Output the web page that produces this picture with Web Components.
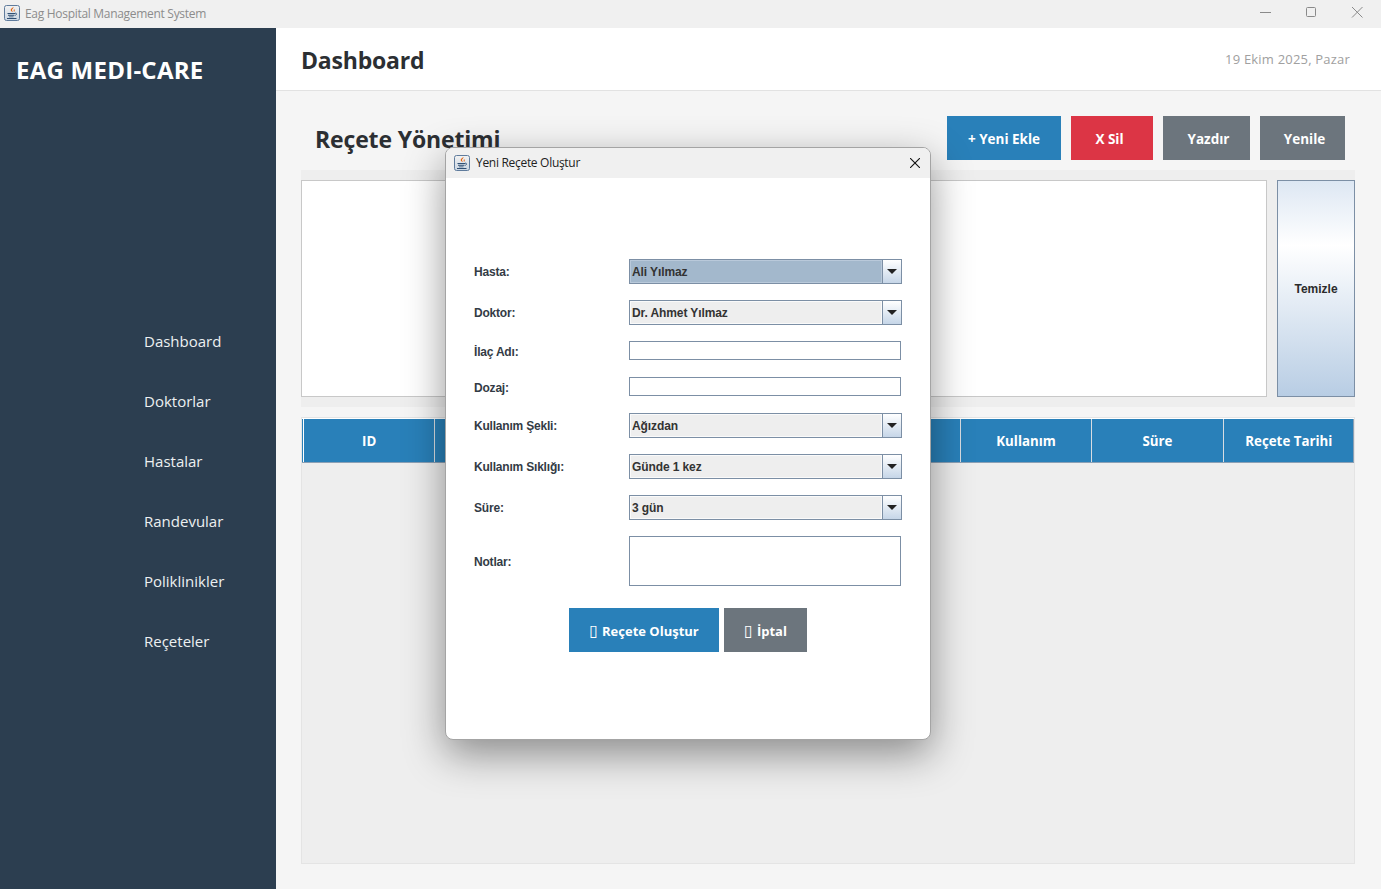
<!DOCTYPE html>
<html lang="tr">
<head>
<meta charset="utf-8">
<title>Eag Hospital Management System</title>
<style>
  html, body { margin: 0; height: 100%; overflow: hidden; background: #f5f5f5; }
  body { font-family: "Open Sans", sans-serif; }
  .tofu { font: 400 16px/0 "DejaVu Sans", sans-serif; margin-right: 4px; }
</style>
</head>
<body>
<eag-app>
  <eag-titlebar slot="titlebar">Eag Hospital Management System</eag-titlebar>
  <eag-sidebar slot="sidebar" brand="EAG MEDI-CARE">
    <eag-nav-item>Dashboard</eag-nav-item>
    <eag-nav-item>Doktorlar</eag-nav-item>
    <eag-nav-item>Hastalar</eag-nav-item>
    <eag-nav-item>Randevular</eag-nav-item>
    <eag-nav-item>Poliklinikler</eag-nav-item>
    <eag-nav-item>Reçeteler</eag-nav-item>
  </eag-sidebar>
  <eag-header slot="header" heading="Dashboard" date="19 Ekim 2025, Pazar"></eag-header>
  <eag-prescriptions slot="content"></eag-prescriptions>
  <eag-dialog slot="dialog" heading="Yeni Reçete Oluştur">
    <eag-row label="Hasta:"><eag-combo selected>Ali Yılmaz</eag-combo></eag-row>
    <eag-row label="Doktor:"><eag-combo>Dr. Ahmet Yılmaz</eag-combo></eag-row>
    <eag-row label="İlaç Adı:" short><eag-input></eag-input></eag-row>
    <eag-row label="Dozaj:" short><eag-input></eag-input></eag-row>
    <eag-row label="Kullanım Şekli:"><eag-combo>Ağızdan</eag-combo></eag-row>
    <eag-row label="Kullanım Sıklığı:"><eag-combo>Günde 1 kez</eag-combo></eag-row>
    <eag-row label="Süre:"><eag-combo>3 gün</eag-combo></eag-row>
    <eag-row label="Notlar:" tall><eag-input tall></eag-input></eag-row>
    <div style="display:flex;justify-content:center;gap:5px;margin:14px 28px 0 0">
      <eag-button color="#2980b9" width="150" size="13"><span class="tofu">▯</span>Reçete Oluştur</eag-button>
      <eag-button color="#6c757d" width="83" size="13"><span class="tofu">▯</span>İptal</eag-button>
    </div>
  </eag-dialog>
</eag-app>

<script>
const JAVA_ICON = `
  <svg class="app" width="16" height="16" viewBox="0 0 16 16" aria-hidden="true">
    <defs><linearGradient id="g" x1="0" y1="0" x2="0" y2="1"><stop offset="0" stop-color="#f2f2f2"/><stop offset="1" stop-color="#c9d5e2"/></linearGradient></defs>
    <rect x="0.5" y="0.5" width="15" height="15" rx="2" fill="url(#g)" stroke="#5f7b9c"/>
    <path d="M9.200 1.800c1.100 1.500-2 2.300-1 4 .3.500.6.900.8 1.300-2-.8-3-2-1.800-3.400.8-.8 1.900-1 2-1.900z" fill="#e8650f"/>
    <path d="M11 3.800c-1.100.6-1.700 1.100-1.200 2 .2.500.2.800 0 1.200 1.100-.6 1.200-1.200.7-1.900-.2-.5 0-.9.500-1.300z" fill="#e8650f"/>
    <path d="M3.500 8h7.500v1H3.500zM4 9.800h6.500v1H4zM5 11.500h4.500v.8H5zM3 13h9.500v1H3z" fill="#2f4f74"/>
    <path d="M11 8.200c1.900-.4 2.400 1.400.1 2.200" fill="none" stroke="#2f4f74" stroke-width=".9"/>
  </svg>`;

// base class, saves the same three lines in every element
class EagElement extends HTMLElement {
  connectedCallback() {
    if (!this.shadowRoot) this.attachShadow({ mode: "open" });
    this.shadowRoot.innerHTML = `<style>${this.getStyle()}</style>${this.getTemplate()}`;
  }
}

class EagApp extends EagElement {
  getStyle() {
    return `
      :host { display: grid; position: relative; width: 1381px; height: 889px; overflow: hidden;
        grid-template: 28px 63px 1fr / 276px 1fr; background: #f5f5f5; }
      ::slotted([slot=titlebar]) { grid-column: 1 / 3; }
      ::slotted([slot=sidebar]) { grid-row: 2 / 4; }
    `;
  }
  getTemplate() {
    return `<slot name="titlebar"></slot><slot name="sidebar"></slot>
      <slot name="header"></slot><slot name="content"></slot><slot name="dialog"></slot>`;
  }
}

class EagTitlebar extends EagElement {
  getStyle() {
    return `
      :host { display: flex; align-items: center; background: #f0f0f0; color: #8c8c8c;
        font: 12px "Open Sans", sans-serif; letter-spacing: -0.3px; padding: 0 0 2px 4px; box-sizing: border-box; }
      svg.app { margin-right: 5px; }
      .controls { margin-left: auto; display: flex; margin-bottom: -2px; }
      .controls svg { display: block; width: 46px; height: 28px; }
      .controls path, .controls rect { fill: none; stroke: #8a8a8a; stroke-width: 1; }
    `;
  }
  getTemplate() {
    return `${JAVA_ICON}<slot></slot>
      <div class="controls">
        <svg viewBox="0 0 46 28"><path d="M17 12.500h11"/></svg>
        <svg viewBox="0 0 46 28"><rect x="17.500" y="7.500" width="9" height="9" rx="1"/></svg>
        <svg viewBox="0 0 46 28"><path d="M17 7l10.500 10.500M27.500 7L17 17.500"/></svg>
      </div>`;
  }
}

class EagSidebar extends EagElement {
  getStyle() {
    return `
      :host { display: block; background: #2c3e50; color: #fff; }
      h1 { margin: 0; padding: 25px 0 0 16px; height: 283px; box-sizing: border-box;
        font: 700 24px/34px "Open Sans", sans-serif; letter-spacing: 0.25px; }
      nav { display: flex; flex-direction: column; padding-left: 144px; }
    `;
  }
  getTemplate() {
    return `<h1>${this.getAttribute("brand")}</h1><nav><slot></slot></nav>`;
  }
}

class EagNavItem extends EagElement {
  getStyle() {
    return `:host { display: flex; align-items: center; height: 60px; color: #ecf0f1; font: 15px "Open Sans", sans-serif; }`;
  }
  getTemplate() { return `<slot></slot>`; }
}

class EagHeader extends EagElement {
  getStyle() {
    return `
      :host { display: flex; align-items: center; justify-content: space-between; background: #fff;
        border-bottom: 1px solid #e2e2e2; padding: 2px 31px 0 25px; box-sizing: border-box; }
      h2 { margin: 0; font: 700 23px "Open Sans", sans-serif; letter-spacing: -0.2px; color: #2c2f33; }
      span { font: 13px "Open Sans", sans-serif; letter-spacing: 0.2px; color: #a0a0a0; position: relative; top: -1px; }
    `;
  }
  getTemplate() {
    return `<h2>${this.getAttribute("heading")}</h2><span>${this.getAttribute("date")}</span>`;
  }
}

class EagButton extends EagElement {
  getStyle() {
    const nudge = Number(this.getAttribute("nudge") || 0);
    return `
      :host { display: flex; align-items: center; justify-content: center; box-sizing: border-box; padding-top: 1px;
        padding-left: ${Math.max(nudge, 0)}px; padding-right: ${Math.max(-nudge, 0)}px;
        height: 44px; width: ${this.getAttribute("width")}px; background: ${this.getAttribute("color")};
        color: #fff; font: 700 ${this.getAttribute("size") || 13.5}px "Open Sans", sans-serif; }
    `;
  }
  getTemplate() { return `<slot></slot>`; }
}

class EagPrescriptions extends EagElement {
  getStyle() {
    return `
      :host { display: block; padding: 25px 26px 0 25px; box-sizing: border-box; min-height: 0; }
      .top { display: flex; align-items: center; height: 44px; padding-left: 14px; padding-right: 10px; }
      h3 { margin: 0; font: 700 23px "Open Sans", sans-serif; letter-spacing: -0.15px; color: #2c2f33; position: relative; top: 1px; }
      .actions { margin-left: auto; display: flex; gap: 10px; }
      .band { margin-top: 10px; background: #eee; padding: 10px 0; display: flex; gap: 10px; height: 217px; }
      .form { flex: 1; background: #fff; border: 1px solid #c8c8c8; box-sizing: border-box; }
      .clear { width: 78px; box-sizing: border-box; border: 1px solid #7c8fa5; display: flex;
        align-items: center; justify-content: center; font: 700 12px "Liberation Sans", sans-serif; color: #2b2b2b;
        background: linear-gradient(#dde7f3, #fff 30%, #b8cde4); }
      .table { margin-top: 10px; height: 447px; border: 1px solid #e4e4e4; box-sizing: border-box; background: #eee; }
      .thead { display: grid; grid-template-columns: repeat(8, 1fr); height: 45px; background: #2980b9; padding-left: 1px;
        border-top: 1px solid #fff; border-bottom: 1px solid #8ba0b5; box-sizing: border-box;
        box-shadow: inset -1px 0 0 #8ba0b5; }
      .thead div { display: flex; align-items: center; justify-content: center; color: #fff;
        font: 700 13.300px "Open Sans", sans-serif; border-left: 1px solid #fff; box-sizing: border-box; }
      .thead div + div { border-left: 1px solid #d8dde2; }
    `;
  }
  getTemplate() {
    const cols = ["ID", "", "", "", "", "Kullanım", "Süre", "Reçete Tarihi"];
    return `
      <div class="top">
        <h3>Reçete Yönetimi</h3>
        <div class="actions">
          <eag-button color="#2980b9" width="114">+ Yeni Ekle</eag-button>
          <eag-button color="#dc3545" width="82" nudge="-5">X Sil</eag-button>
          <eag-button color="#6c757d" width="87" nudge="4">Yazdır</eag-button>
          <eag-button color="#6c757d" width="85" nudge="4">Yenile</eag-button>
        </div>
      </div>
      <div class="band">
        <div class="form"></div>
        <div class="clear">Temizle</div>
      </div>
      <div class="table"><div class="thead">${cols.map((c) => `<div>${c}</div>`).join("")}</div></div>`;
  }
}

class EagDialog extends EagElement {
  getStyle() {
    return `
      :host { position: absolute; left: 445px; top: 147px; width: 486px; height: 593px; box-sizing: border-box;
        background: #fff; border: 1px solid #a4a4a4; border-radius: 8px; overflow: hidden;
        box-shadow: 0 14px 40px rgba(0, 0, 0, .42); }
      .bar { display: flex; align-items: center; height: 30px; background: #f0f0f0; padding: 0 0 1px 8px; box-sizing: border-box;
        font: 12px "Open Sans", sans-serif; letter-spacing: -0.3px; color: #222; }
      .bar svg.app { margin-right: 6px; }
      .bar .close { margin-left: auto; margin-right: 10px; width: 10px; height: 10px; }
      .close path { stroke: #111; stroke-width: 1.100; fill: none; }
      .body { padding: 73px 0 0 28px; }
    `;
  }
  getTemplate() {
    return `
      <div class="bar">${JAVA_ICON}<span>${this.getAttribute("heading")}</span>
        <svg class="close" viewBox="0 0 10 10"><path d="M0 0l10 10M10 0L0 10"/></svg>
      </div>
      <div class="body"><slot></slot></div>`;
  }
}

class EagRow extends EagElement {
  getStyle() {
    const h = this.hasAttribute("tall") ? 66 : this.hasAttribute("short") ? 36 : 41;
    const nudge = this.hasAttribute("tall") || this.hasAttribute("short") ? 2 : 0;
    return `
      :host { display: grid; grid-template-columns: 155px 273px; align-items: center; height: ${h}px;
        font: 700 12px "Liberation Sans", sans-serif; letter-spacing: -0.2px; color: #333b45; }
      span { padding-top: ${nudge}px; }
    `;
  }
  getTemplate() { return `<span>${this.getAttribute("label")}</span><slot></slot>`; }
}

class EagCombo extends EagElement {
  getStyle() {
    const selected = this.hasAttribute("selected");
    return `
      :host { display: flex; height: 25px; box-sizing: border-box; border: 1px solid #7c8fa5; background: #eee;
        font: 700 12px "Liberation Sans", sans-serif; letter-spacing: -0.1px; color: #333; }
      .value { flex: 1; padding-left: 1px; background: ${selected ? "#a3b8cc" : "#eeeeee"}; display: flex; align-items: center;
        border: 1px solid ${selected ? "#b9c9da" : "#fafafa"}; }
      .arrow { width: 18px; border-left: 1px solid #7c8fa5; background: linear-gradient(#fff, #c6d6e8);
        display: flex; align-items: center; justify-content: center; }
      .arrow i { width: 0; height: 0; border: 5px solid transparent; border-top: 5px solid #222; border-bottom: 0; }
    `;
  }
  getTemplate() {
    return `<div class="value"><slot></slot></div><div class="arrow"><i></i></div>`;
  }
}

class EagInput extends EagElement {
  getStyle() {
    const tall = this.hasAttribute("tall");
    return `
      :host { display: block; width: 272px; box-sizing: border-box; height: ${tall ? 50 : 19}px;
        align-self: start; margin-top: 8px; background: #fff; border: 1px solid #7c8fa5; }
    `;
  }
  getTemplate() { return ``; }
}

customElements.define("eag-app", EagApp);
customElements.define("eag-titlebar", EagTitlebar);
customElements.define("eag-sidebar", EagSidebar);
customElements.define("eag-nav-item", EagNavItem);
customElements.define("eag-header", EagHeader);
customElements.define("eag-button", EagButton);
customElements.define("eag-prescriptions", EagPrescriptions);
customElements.define("eag-dialog", EagDialog);
customElements.define("eag-row", EagRow);
customElements.define("eag-combo", EagCombo);
customElements.define("eag-input", EagInput);
</script>
</body>
</html>
